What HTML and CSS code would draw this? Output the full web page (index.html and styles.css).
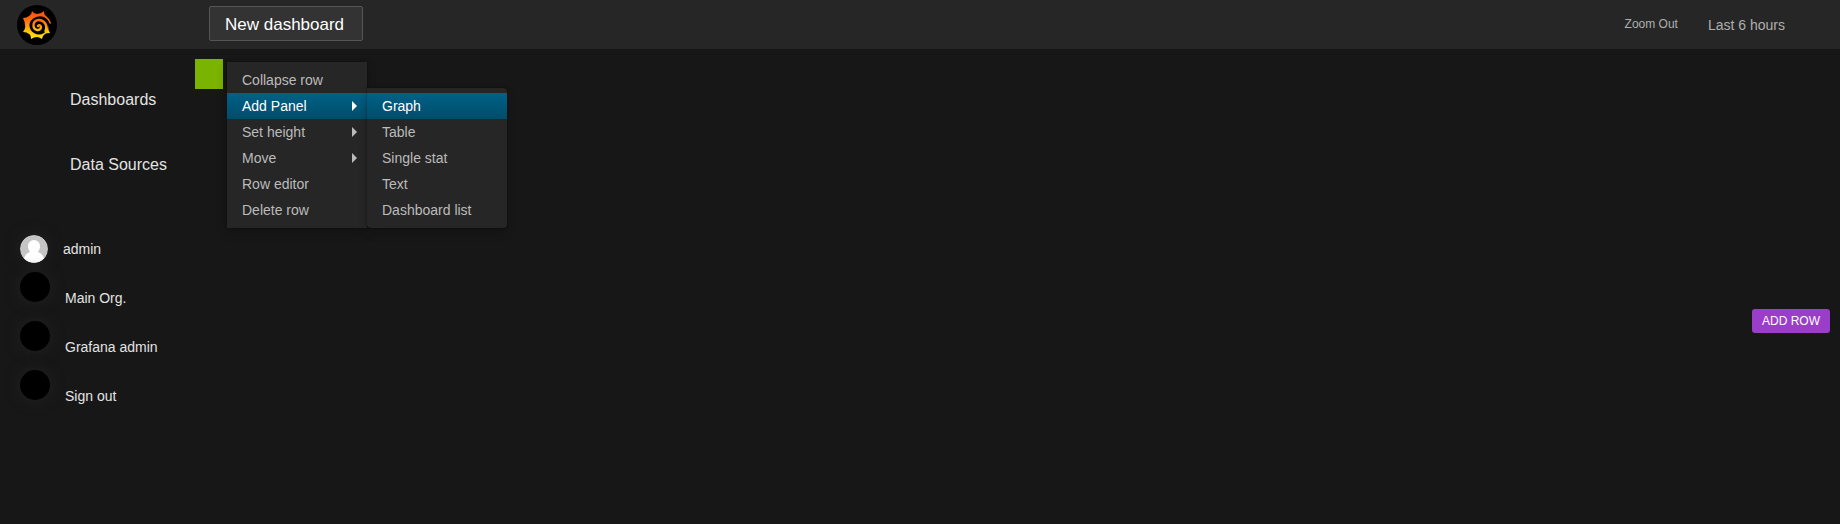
FILE: index.html
```
<!DOCTYPE html>
<html lang="en">
<head>
<meta charset="utf-8">
<title>New dashboard</title>
<link rel="stylesheet" href="styles.css">
</head>
<body>
<header class="topbar">
  <a class="brand" href="#" aria-label="Home">
    <svg viewBox="0 0 40 40" width="40" height="40" aria-hidden="true">
      <defs>
        <linearGradient id="flame" gradientUnits="userSpaceOnUse" x1="0" y1="6" x2="0" y2="34">
          <stop offset="0" stop-color="#ff4a0a"/>
          <stop offset=".35" stop-color="#ff7208"/>
          <stop offset=".7" stop-color="#ffc005"/>
          <stop offset="1" stop-color="#ffe800"/>
        </linearGradient>
      </defs>
      <circle cx="20" cy="20" r="20"/>
      <path fill="url(#flame)" d="M15 6 Q17 9 20 9 Q24 9 27 6 Q27 10 29 11 Q32 13 34 18 L33 19 Q31 14 27 12 Q22 10 17 13 Q12 16 12.500 21 Q13 26 17 28 Q22 31 27 28 Q30 26 31 20 Q31 25 33 28 Q29 28 28 29 Q25 31 25 34 Q22 32 20 32 Q17 32 14 34 Q14 30 12 29 Q10 27 6 27 Q9 23 8 20 Q8 17 6 13 Q10 13 12 11 Q15 9 15 6 Z"/>
      <path fill="none" stroke="url(#flame)" stroke-width="2.400" stroke-linecap="round" d="M28.500 26 C31 20 27 15 22 15 C18 15 16 18 16.500 21 C17 26 23 26 24 22.500 C24 20 22 19.500 21 21"/>
    </svg>
  </a>
  <button class="title-button" type="button">New dashboard</button>
  <div class="time-tools">
    <a class="zoom-out" href="#">Zoom Out</a>
    <a class="time-range" href="#">Last 6 hours</a>
  </div>
</header>
<div class="workspace">
  <aside class="sidebar">
    <nav class="main-links">
      <a href="#">Dashboards</a>
      <a href="#">Data Sources</a>
    </nav>
    <nav class="account">
      <a class="profile" href="#">
        <svg class="avatar" viewBox="0 0 28 28" width="28" height="28" aria-hidden="true">
          <circle cx="14" cy="14" r="14" fill="#c5c5c5"/>
          <path fill="#fff" d="M14 5a6 6 0 0 1 6 6c0 3-1 4-2 6c3 1 5 3 6 6.500a14 14 0 0 1-20 0c1-3.500 3-5.500 6-6.500c-1-2-2-3-2-6a6 6 0 0 1 6-6z"/>
        </svg>
        <span>admin</span>
      </a>
      <a class="account-link" href="#"><i class="disc"></i><span>Main Org.</span></a>
      <a class="account-link" href="#"><i class="disc"></i><span>Grafana admin</span></a>
      <a class="account-link" href="#"><i class="disc"></i><span>Sign out</span></a>
    </nav>
  </aside>
  <main class="dashboard">
    <div class="row-control">
      <button class="row-handle" type="button" aria-label="Row menu"></button>
      <ul class="menu row-menu">
        <li><a href="#">Collapse row</a></li>
        <li class="has-submenu">
          <a class="active parent" href="#">Add Panel</a>
          <ul class="menu submenu">
            <li><a class="active" href="#">Graph</a></li>
            <li><a href="#">Table</a></li>
            <li><a href="#">Single stat</a></li>
            <li><a href="#">Text</a></li>
            <li><a href="#">Dashboard list</a></li>
          </ul>
        </li>
        <li><a class="parent" href="#">Set height</a></li>
        <li><a class="parent" href="#">Move</a></li>
        <li><a href="#">Row editor</a></li>
        <li><a href="#">Delete row</a></li>
      </ul>
    </div>
    <button class="add-row" type="button">ADD ROW</button>
  </main>
</div>
</body>
</html>
```
FILE: styles.css
```
* { box-sizing: border-box; }
body {
  margin: 0;
  min-height: 100vh;
  display: flex;
  flex-direction: column;
  background: #171717;
  color: #e3e3e3;
  font: 14px/20px "Liberation Sans", Arial, sans-serif;
}
a { color: inherit; text-decoration: none; }
button { font-family: inherit; cursor: pointer; }
.topbar {
  display: flex;
  align-items: flex-start;
  min-height: 49px;
  padding: 5px 55px 4px 17px;
  background: #262626;
}
.brand { display: flex; width: 192px; }
.title-button {
  height: 35px;
  padding: 2px 18px 0 15px;
  border: 1px solid #555;
  border-radius: 2px;
  margin-top: 1px;
  background: #333;
  color: #fff;
  font-size: 17px;
}
.time-tools {
  display: flex;
  align-items: flex-start;
  gap: 30px;
  margin: 10px 0 0 auto;
  color: #adafae;
}
.zoom-out { font-size: 12px; line-height: 18px; }
.workspace { display: flex; flex: 1; }
.sidebar { width: 195px; padding-top: 31px; }
.main-links {
  display: flex;
  flex-direction: column;
  gap: 25px;
  padding-left: 70px;
  font-size: 16px;
  line-height: 40px;
}
.account { padding: 50px 0 0 20px; }
.profile { display: flex; align-items: center; gap: 15px; margin-bottom: 9px; }
.avatar, .disc { border-radius: 50%; box-shadow: 0 0 14px 1px #202020; }
.account-link { display: flex; align-items: flex-end; gap: 15px; height: 36px; margin-bottom: 13px; }
.disc { width: 30px; height: 30px; background: #000; align-self: flex-start; }
.dashboard { flex: 1; padding: 10px 10px 0 0; }
.row-control { position: relative; width: 28px; }
.row-handle { display: block; width: 28px; height: 30px; padding: 0; border: 0; background: #7ab300; }
.menu {
  width: 140px;
  margin: 0;
  padding: 5px 0;
  list-style: none;
  background: #262626;
  box-shadow: 0 5px 10px rgba(0, 0, 0, .2), 0 0 2px rgba(0, 0, 0, .5);
  color: #bbb;
}
.menu a { display: flex; justify-content: space-between; align-items: center; padding: 3px 10px 3px 15px; }
.menu .active { background: linear-gradient(#006187, #004d69); color: #fff; }
.row-menu { position: absolute; top: 3px; left: 32px; }
.has-submenu { position: relative; }
.submenu { position: absolute; top: -5px; left: 100%; border-radius: 0 4px 4px 4px; }
.parent::after {
  content: "";
  border: 5px solid transparent;
  border-left-color: currentColor;
  border-right: 0;
}
.add-row {
  display: block;
  height: 24px;
  margin: 220px 0 0 auto;
  padding: 0 10px;
  border: 0;
  border-radius: 3px;
  background: #9a3dc9;
  color: #fff;
  font-size: 12px;
}
```
